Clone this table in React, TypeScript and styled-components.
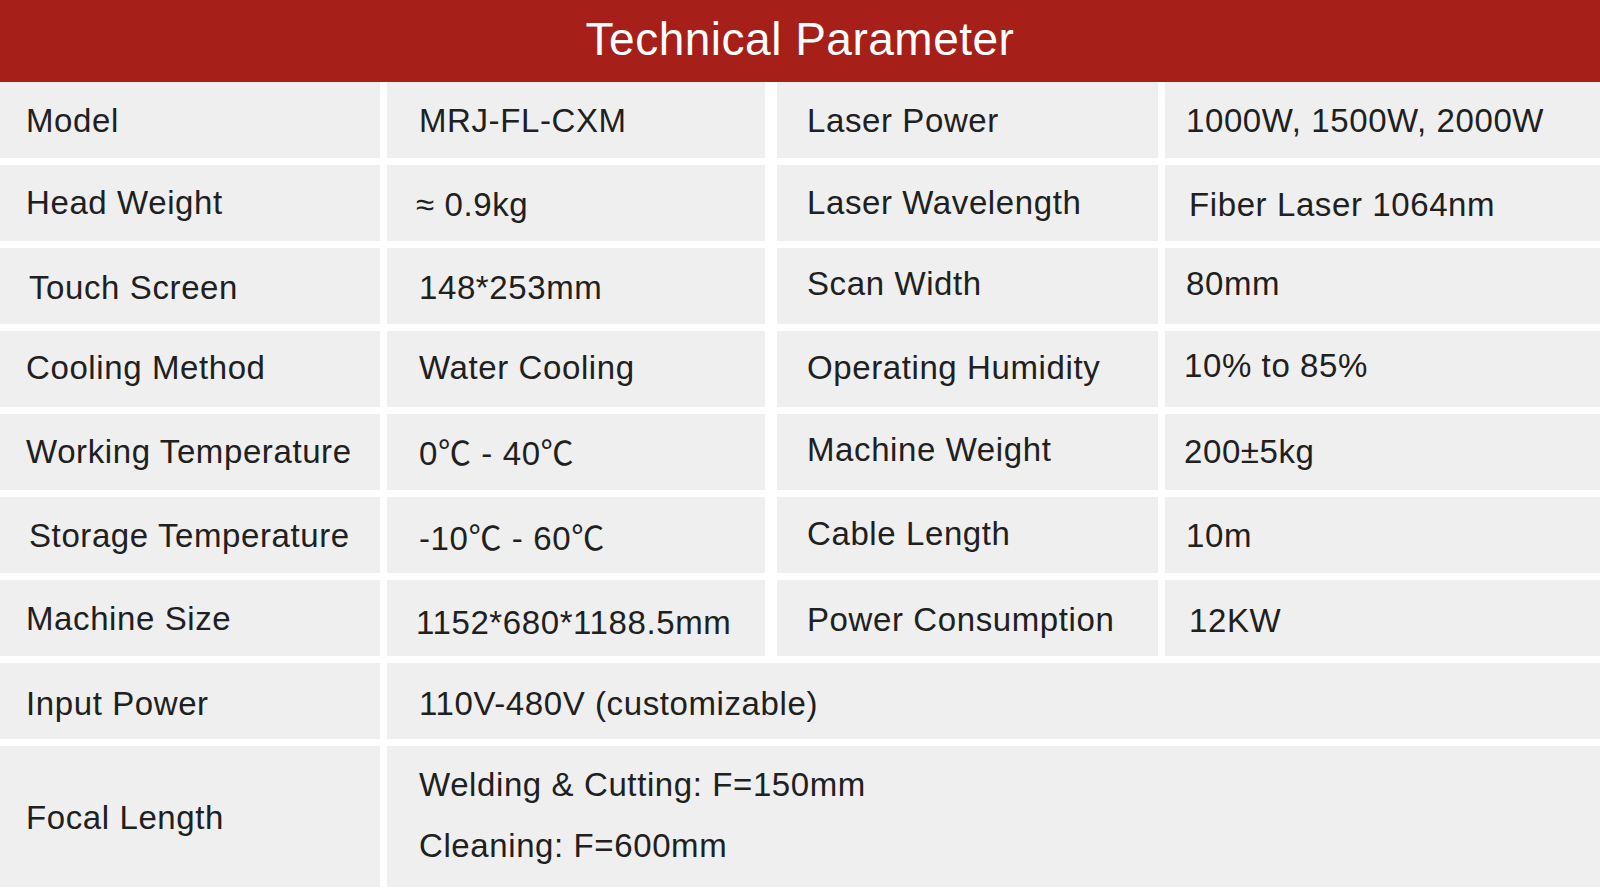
import React from "react";
import styled, { createGlobalStyle } from "styled-components";

const GlobalStyle = createGlobalStyle`
  html, body {
    margin: 0;
    padding: 0;
    background: #ffffff;
  }
  body {
    font-family: "Liberation Sans", Arial, "Noto Sans CJK SC", sans-serif;
    color: #202020;
  }
`;

const Page = styled.div`
  width: 1600px;
  height: 888px;
  background: #ffffff;
  overflow: hidden;
`;

const Header = styled.header`
  height: 82px;
  background: #a61f18;
  display: flex;
  align-items: center;
  justify-content: center;
  padding-bottom: 4px;
  box-sizing: border-box;
`;

const Title = styled.h1`
  margin: 0;
  color: #ffffff;
  font-weight: 400;
  font-size: 46px;
  letter-spacing: 0.5px;
`;

const Table = styled.div`
  display: grid;
  grid-template-columns: 380px 378px 386px 1fr;
  grid-auto-rows: 76px;
  column-gap: 7px;
  row-gap: 7px;
`;

const Cell = styled.div<{ $pad: number; $split?: boolean; $wide?: boolean }>`
  background: #efefef;
  display: flex;
  flex-direction: column;
  justify-content: center;
  padding-left: ${(p) => p.$pad}px;
  padding-top: 2px;
  box-sizing: border-box;
  margin-left: ${(p) => (p.$split ? "5px" : "0")};
  grid-column: ${(p) => (p.$wide ? "2 / -1" : "auto")};
  font-size: 33px;
  letter-spacing: 0.6px;
  white-space: nowrap;
`;

const Text = styled.span<{ $dx?: number; $dy?: number }>`
  display: block;
  transform: translate(${(p) => p.$dx ?? 0}px, ${(p) => p.$dy ?? 0}px);
`;

const Line = styled.div`
  line-height: 61px;
`;

const TallRow = styled.div`
  grid-column: 1 / -1;
  display: grid;
  grid-template-columns: 380px 1fr;
  column-gap: 7px;
  height: 141px;
`;

type Value = { text: string; dx?: number; dy?: number };
type Row = [Value, Value, Value, Value];

const v = (text: string, dx = 0, dy = 0): Value => ({ text, dx, dy });

const rows: Row[] = [
  [v("Model"), v("MRJ-FL-CXM"), v("Laser Power"), v("1000W, 1500W, 2000W")],
  [v("Head Weight", 0, -1), v("≈ 0.9kg", -3, 1), v("Laser Wavelength", 0, -1), v("Fiber Laser 1064nm", 3, 1)],
  [v("Touch Screen", 3, 1), v("148*253mm", 0, 1), v("Scan Width", 0, -3), v("80mm", 0, -3)],
  [v("Cooling Method", 0, -2), v("Water Cooling", 0, -2), v("Operating Humidity", 0, -2), v("10% to 85%", -2, -4)],
  [v("Working Temperature", 0, -1), v("0℃ - 40℃", 0, -2), v("Machine Weight", 0, -3), v("200±5kg", -2, -1)],
  [v("Storage Temperature", 3, 0), v("-10℃ - 60℃"), v("Cable Length", 0, -2), v("10m")],
  [v("Machine Size"), v("1152*680*1188.5mm", -3, 4), v("Power Consumption", 0, 1), v("12KW", 3, 2)],
];

export default function App() {
  return (
    <Page>
      <GlobalStyle />
      <Header>
        <Title>Technical Parameter</Title>
      </Header>
      <Table>
        {rows.map(([a, b, c, d]) => (
          <React.Fragment key={a.text}>
            <Cell $pad={26}>
              <Text $dx={a.dx} $dy={a.dy}>{a.text}</Text>
            </Cell>
            <Cell $pad={32}>
              <Text $dx={b.dx} $dy={b.dy}>{b.text}</Text>
            </Cell>
            <Cell $pad={30} $split>
              <Text $dx={c.dx} $dy={c.dy}>{c.text}</Text>
            </Cell>
            <Cell $pad={21}>
              <Text $dx={d.dx} $dy={d.dy}>{d.text}</Text>
            </Cell>
          </React.Fragment>
        ))}
        <Cell $pad={26}>
          <Text $dy={2}>Input Power</Text>
        </Cell>
        <Cell $pad={32} $wide>
          <Text $dy={2}>110V-480V (customizable)</Text>
        </Cell>
        <TallRow>
          <Cell $pad={26}>Focal Length</Cell>
          <Cell $pad={32}>
            <Text $dy={-3}>
              <Line>Welding &amp; Cutting: F=150mm</Line>
              <Line>Cleaning: F=600mm</Line>
            </Text>
          </Cell>
        </TallRow>
      </Table>
    </Page>
  );
}
